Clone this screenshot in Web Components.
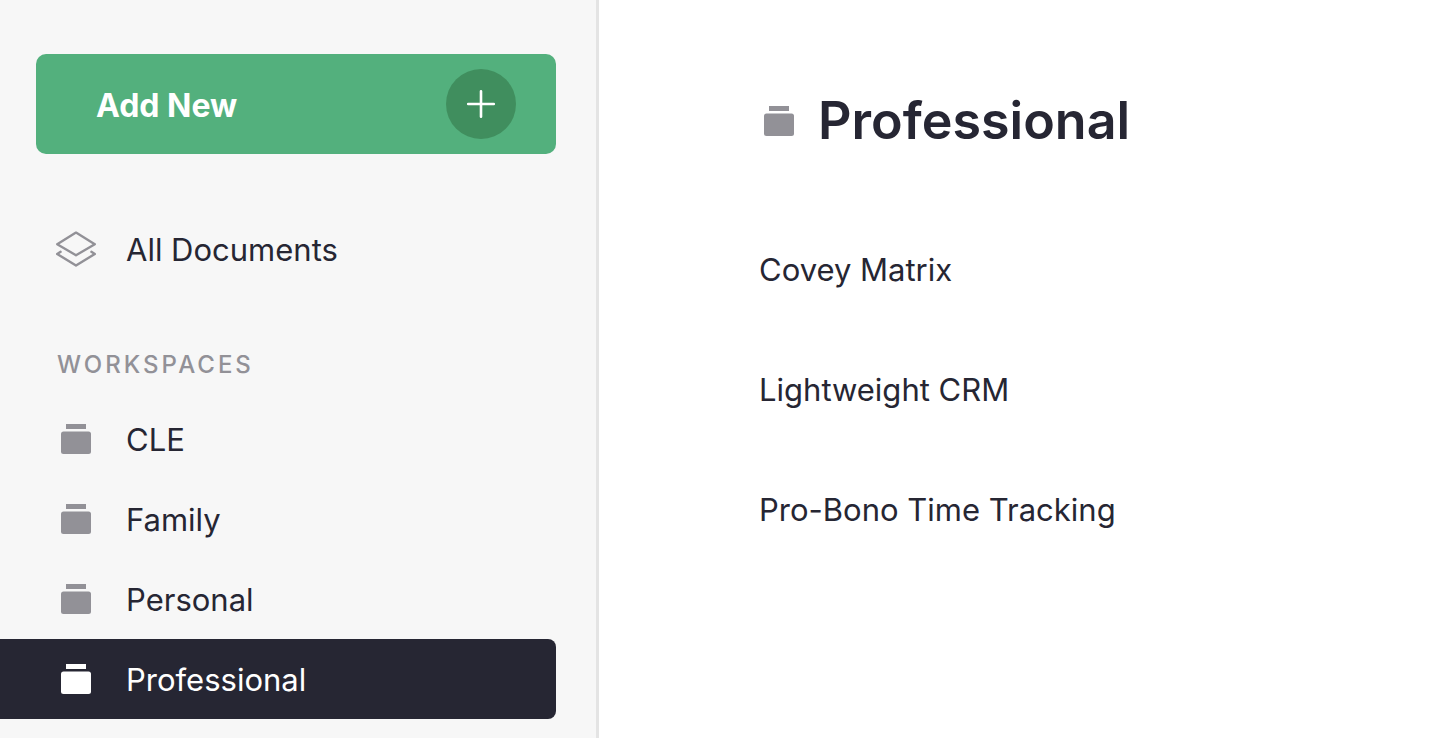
<!DOCTYPE html>
<html lang="en">
<head>
<meta charset="utf-8">
<meta name="viewport" content="width=device-width, initial-scale=1">
<title>Professional</title>
<style>
  body { margin: 0; font-family: Inter, "Liberation Sans", sans-serif; font-size: 31px; line-height: 40px; color: #262633; background: #fff; }
</style>
</head>
<body>
<app-shell>
  <side-bar slot="sidebar">
    <add-button>Add New</add-button>
    <nav-item icon="layers">All Documents</nav-item>
    <nav-group heading="Workspaces">
      <nav-item icon="box">CLE</nav-item>
      <nav-item icon="box">Family</nav-item>
      <nav-item icon="box">Personal</nav-item>
      <nav-item icon="box" active>Professional</nav-item>
    </nav-group>
  </side-bar>
  <workspace-view heading="Professional">
    <doc-link>Covey Matrix</doc-link>
    <doc-link>Lightweight CRM</doc-link>
    <doc-link>Pro-Bono Time Tracking</doc-link>
  </workspace-view>
</app-shell>

<script>
const define = (name, render) => customElements.define(name, class extends HTMLElement {
  connectedCallback() {
    if (this.shadowRoot) return;
    this.attachShadow({ mode: "open" }).innerHTML = render(this);
  }
});

const ICONS = {
  box: `<svg viewBox="0 0 40 40" width="40" height="40" aria-hidden="true"><path fill="currentColor" d="M10 5h20v5H10z"/><rect x="5" y="12.4" width="30" height="22.6" rx="2.5" fill="currentColor"/></svg>`,
  layers: `<svg viewBox="0 0 40 40" width="40" height="40" aria-hidden="true"><g fill="none" stroke="currentColor" stroke-width="2.4" stroke-linejoin="round" stroke-linecap="round"><path d="M20 3.6 38.8 15.2 20 26.2 1.2 15.2z"/><path d="M4.6 22.8 1.2 25 20 36.6 38.8 25 35.4 22.8"/></g></svg>`
};

define("ui-icon", el => `
  <style>:host { display: block; flex: none; width: 40px; height: 40px; } svg { display: block; }</style>
  ${ICONS[el.getAttribute("name")]}`);

define("app-shell", () => `
  <style>
    :host { display: flex; min-height: 100vh; }
    main { flex: 1; min-width: 0; }
  </style>
  <slot name="sidebar"></slot>
  <main><slot></slot></main>`);

define("side-bar", () => `
  <style>
    :host { display: block; box-sizing: border-box; flex: none; width: 599px; padding: 54px 40px 19px 0; background: #f7f7f7; border-right: 3px solid #e4e4e4; }
  </style>
  <slot></slot>`);

define("add-button", () => `
  <style>
    :host { display: block; padding-left: 36px; margin-bottom: 55px; }
    button { display: flex; align-items: center; justify-content: space-between; box-sizing: border-box; width: 100%; height: 100px; padding: 0 40px 0 60px; border: 0; border-radius: 10px; background: #53b07d; color: #fff; font: inherit; font-size: 32px; font-weight: 700; cursor: pointer; }
    .label { padding-top: 4px; }
    .disc { display: grid; place-items: center; width: 70px; height: 70px; border-radius: 50%; background: #408e5e; }
  </style>
  <button type="button"><span class="label"><slot></slot></span>
    <span class="disc"><svg width="30" height="30" viewBox="0 0 30 30" aria-hidden="true"><path d="M15 2.2v25.6M2.2 15h25.6" stroke="#fff" stroke-width="2.6" stroke-linecap="round"/></svg></span>
  </button>`);

define("nav-item", el => `
  <style>
    :host { display: block; }
    a { display: flex; align-items: center; gap: 30px; height: 80px; padding-left: 56px; box-sizing: border-box; color: inherit; text-decoration: none; border-radius: 0 8px 8px 0; }
    span { padding-top: 2px; }
    ui-icon { color: #929197; }
    :host([active]) a, :host([active]) ui-icon { color: #fff; }
    :host([active]) a { background: #262633; }
  </style>
  <a href="#" ${el.hasAttribute("active") ? 'aria-current="page"' : ""}><ui-icon name="${el.getAttribute("icon")}"></ui-icon><span><slot></slot></span></a>`);

define("nav-group", el => `
  <style>
    :host { display: block; margin-top: 56px; }
    h2 { margin: 0 0 14px; padding-left: 57px; font-size: 24px; line-height: 40px; font-weight: 500; letter-spacing: 3px; text-transform: uppercase; color: #929197; }
  </style>
  <h2>${el.getAttribute("heading")}</h2>
  <nav aria-label="${el.getAttribute("heading")}"><slot></slot></nav>`);

define("workspace-view", el => `
  <style>
    :host { display: block; padding: 81px 40px 40px 160px; }
    header { display: flex; align-items: center; gap: 19px; margin-bottom: 89px; }
    h1 { margin: 0; font-size: 52px; line-height: 80px; font-weight: 600; }
    ui-icon { color: #929197; }
  </style>
  <header><ui-icon name="box"></ui-icon><h1>${el.getAttribute("heading")}</h1></header>
  <slot></slot>`);

define("doc-link", () => `
  <style>
    :host { display: block; margin-bottom: 80px; }
    :host(:last-child) { margin-bottom: 0; }
    a { color: inherit; text-decoration: none; }
  </style>
  <a href="#"><slot></slot></a>`);
</script>
</body>
</html>
